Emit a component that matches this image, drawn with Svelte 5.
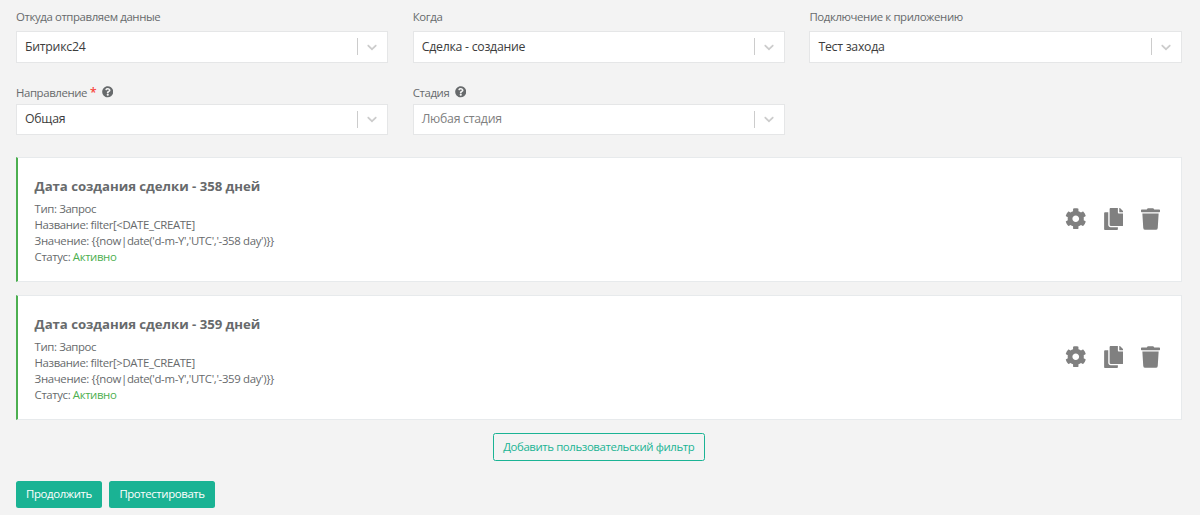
<script>
  const fields = [
    { label: 'Откуда отправляем данные', value: 'Битрикс24' },
    { label: 'Когда', value: 'Сделка - создание' },
    { label: 'Подключение к приложению', value: 'Тест захода' },
    { label: 'Направление', value: 'Общая', required: true, help: true },
    { label: 'Стадия', value: 'Любая стадия', placeholder: true, help: true }
  ];
  const filters = [
    { days: 358, sign: '<' },
    { days: 359, sign: '>' }
  ];
</script>

<main>
  <section class="fields">
    {#each fields as f}
      <div class="field">
        <div class="label">
          <span>{f.label}</span>
          {#if f.required}<span class="star">*</span>{/if}
          {#if f.help}
            <svg class="help" viewBox="0 0 512 512"><path fill="currentColor" d="M504 256c0 137-111 248-248 248S8 393 8 256 119 8 256 8s248 111 248 248zM262.700 90c-54.500 0-89.300 23-116.500 63.800-3.500 5.300-2.400 12.400 2.700 16.300l34.700 26.300c5.200 3.900 12.600 3 16.700-2.100 17.900-22.700 30.100-35.800 57.300-35.800 20.400 0 45.700 13.100 45.700 33 0 15-12.400 22.700-32.500 34C247.100 238.500 216 254.900 216 296v4c0 6.600 5.400 12 12 12h56c6.600 0 12-5.400 12-12v-1.300c0-28.500 83.200-29.600 83.200-106.700 0-58-60.200-102-116.500-102zM256 338c-25.400 0-46 20.600-46 46s20.600 46 46 46 46-20.600 46-46-20.600-46-46-46z"/></svg>
          {/if}
        </div>
        <div class="select">
          <span class="value" class:placeholder={f.placeholder}>{f.value}</span>
          <span class="sep"></span>
          <svg class="chev" viewBox="0 0 20 20"><path fill="currentColor" d="M4.516 7.548c0.436-0.446 1.043-0.481 1.576 0l3.908 3.747 3.908-3.747c0.533-0.481 1.141-0.446 1.574 0 0.436 0.445 0.408 1.197 0 1.615-0.406 0.418-4.695 4.502-4.695 4.502-0.217 0.223-0.502 0.335-0.787 0.335s-0.570-0.112-0.789-0.335c0 0-4.287-4.084-4.695-4.502s-0.436-1.170 0-1.615z"/></svg>
        </div>
      </div>
    {/each}
  </section>

  <section class="cards">
    {#each filters as c}
      <article class="card">
        <div class="info">
          <h3>Дата создания сделки - {c.days} дней</h3>
          <p>Тип: Запрос</p>
          <p>Название: filter[{c.sign}DATE_CREATE]</p>
          <p class="expr">Значение: {`{{now|date('d-m-Y','UTC','-${c.days} day')}}`}</p>
          <p>Статус: <span class="active">Активно</span></p>
        </div>
        <div class="actions">
          <svg class="gear" viewBox="0 0 512 512"><path fill="currentColor" d="M487.400 315.700l-42.600-24.600c4.300-23.200 4.300-47 0-70.200l42.600-24.600c4.900-2.800 7.100-8.600 5.500-14-11.100-35.600-30-67.800-54.700-94.600-3.800-4.100-10-5.100-14.800-2.300L380.800 110c-17.900-15.400-38.500-27.300-60.800-35.100V25.800c0-5.600-3.900-10.500-9.400-11.700-36.700-8.200-74.300-7.800-109.200 0-5.500 1.200-9.400 6.100-9.400 11.700V75c-22.200 7.900-42.800 19.800-60.800 35.100L88.700 85.500c-4.900-2.800-11-1.900-14.800 2.300-24.700 26.700-43.600 58.900-54.700 94.600-1.700 5.400.6 11.200 5.500 14L67.300 221c-4.300 23.200-4.300 47 0 70.200l-42.600 24.600c-4.900 2.800-7.100 8.600-5.500 14 11.100 35.600 30 67.800 54.700 94.600 3.800 4.100 10 5.100 14.800 2.300l42.600-24.600c17.900 15.400 38.500 27.300 60.800 35.100v49.200c0 5.600 3.900 10.500 9.400 11.700 36.700 8.200 74.300 7.800 109.200 0 5.500-1.200 9.400-6.100 9.400-11.700v-49.200c22.200-7.900 42.800-19.800 60.800-35.100l42.600 24.600c4.900 2.800 11 1.900 14.800-2.300 24.700-26.700 43.600-58.900 54.700-94.600 1.500-5.500-.7-11.300-5.600-14.100zM256 336c-44.100 0-80-35.900-80-80s35.900-80 80-80 80 35.900 80 80-35.900 80-80 80z"/></svg>
          <svg class="copy" viewBox="0 0 448 512"><path fill="currentColor" d="M320 448v40c0 13.255-10.745 24-24 24H24c-13.255 0-24-10.745-24-24V120c0-13.255 10.745-24 24-24h72v296c0 30.879 25.121 56 56 56h168zm0-344V0H152c-13.255 0-24 10.745-24 24v368c0 13.255 10.745 24 24 24h272c13.255 0 24-10.745 24-24V128H344c-13.200 0-24-10.800-24-24zm120.971-31.029L375.029 7.029A24 24 0 0 0 358.059 0H352v96h96v-6.059a24 24 0 0 0-7.029-16.970z"/></svg>
          <svg class="trash" viewBox="0 0 448 512"><path fill="currentColor" d="M432 32H312l-9.400-18.700A24 24 0 0 0 281.100 0H166.800a23.720 23.720 0 0 0-21.400 13.300L136 32H16A16 16 0 0 0 0 48v32a16 16 0 0 0 16 16h416a16 16 0 0 0 16-16V48a16 16 0 0 0-16-16zM53.200 467a48 48 0 0 0 47.900 45h245.800a48 48 0 0 0 47.900-45L416 128H32z"/></svg>
        </div>
      </article>
    {/each}
  </section>

  <div class="add"><button class="outline">Добавить пользовательский фильтр</button></div>
  <div class="footer">
    <button class="solid">Продолжить</button>
    <button class="solid second">Протестировать</button>
  </div>
</main>

<style>
  :global(body) { background: #f3f3f3; }
  main {
    box-sizing: border-box;
    height: 515px;
    padding: 8px 18.500px 0 16px;
    overflow: hidden;
    background: #f3f3f3;
    color: #676a6c;
    font-family: "Open Sans", "Noto Sans", sans-serif;
    font-size: 11.400px;
    letter-spacing: -0.390px;
  }
  .fields {
    display: grid;
    grid-template-columns: repeat(3, 372.300px);
    grid-template-rows: 54.500px 54.500px;
    column-gap: 24.400px;
    row-gap: 18px;
  }
  .field { display: flex; flex-direction: column; justify-content: space-between; }
  .label { display: flex; align-items: center; height: 17px; line-height: 17px; }
  .field:nth-child(n + 4) .label { margin-top: 3px; }
  .star { margin-left: 3px; color: #f8443c; font-size: 12px; font-weight: 600; }
  .help { width: 11.500px; height: 11.500px; margin-left: 5.500px; }
  .select {
    box-sizing: border-box;
    display: flex;
    align-items: center;
    height: 31.500px;
    border: 1px solid #e5e6e7;
    background: #fff;
  }
  .value { flex: 1; padding-left: 8px; color: #3c3c3c; font-size: 12.300px; line-height: 18px; letter-spacing: -0.260px; }
  .placeholder { color: #808080; }
  .sep { width: 1px; height: 17px; background: #ccc; }
  .chev { width: 16px; height: 16px; margin: 0 7px 0 6px; color: #ccc; }
  .cards { display: grid; gap: 13px; margin-top: 22px; }
  .card {
    box-sizing: border-box;
    display: flex;
    align-items: center;
    justify-content: space-between;
    height: 125px;
    padding: 0 21px 0 16.600px;
    border: 1px solid #e7eaec;
    border-left: 2px solid #4caf50;
    background: #fff;
  }
  .info { padding-top: 2.500px; }
  h3 { margin: 0 0 6px; font-size: 13.200px; line-height: 18px; font-weight: 700; letter-spacing: -0.030px; }
  p { margin: 0; line-height: 16px; }
  .expr { letter-spacing: -0.340px; }
  .active { color: #4caf50; }
  .actions { display: flex; align-items: center; margin-bottom: 2px; color: #808080; }
  .actions svg { display: block; height: 22px; }
  .actions .gear { width: 21.500px; height: 21.500px; margin-right: 17.500px; }
  .copy { width: 19.500px; margin-right: 17.500px; }
  .trash { width: 19px; }
  button { box-sizing: border-box; padding: 0 0 1px; border-radius: 2.500px; font: inherit; letter-spacing: inherit; }
  .add { display: flex; justify-content: center; margin-top: 13px; }
  .outline { width: 212px; height: 28px; border: 1px solid #1ab394; background: transparent; color: #1ab394; }
  .footer { display: flex; gap: 7px; margin-top: 19.500px; }
  .solid { width: 86px; height: 27px; padding-bottom: 2px; border: 0; background: #1ab394; color: #fff; }
  .second { width: 106px; }
</style>
